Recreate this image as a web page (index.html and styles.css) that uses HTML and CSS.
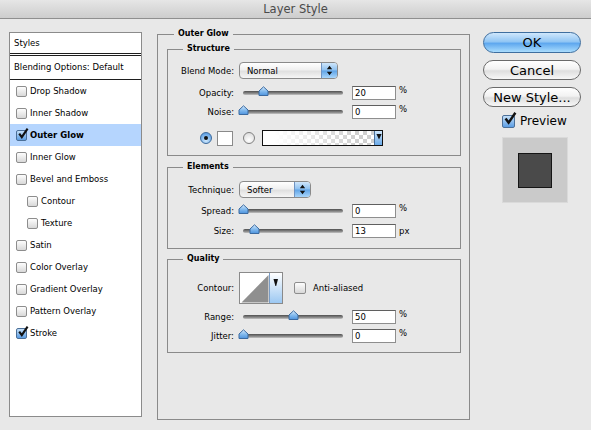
FILE: index.html
```html
<!DOCTYPE html>
<html lang="en">
<head>
    <meta charset="UTF-8">
    <meta name="viewport" content="width=device-width, initial-scale=1.0">
    <title>Layer Style</title>
    <link rel="stylesheet" href="styles.css">
</head>
<body>
    <!-- shared gradients and glyphs for the aqua controls -->
    <svg class="defs" width="0" height="0">
        <defs>
            <linearGradient id="aqua" x1="0" y1="0" x2="0" y2="1">
                <stop offset="0" stop-color="#d6eafc"/>
                <stop offset="0.5" stop-color="#84bbee"/>
                <stop offset="1" stop-color="#4d93de"/>
            </linearGradient>
            <linearGradient id="aqua-pale" x1="0" y1="0" x2="0" y2="1">
                <stop offset="0" stop-color="#ffffff"/>
                <stop offset="1" stop-color="#9cc8f2"/>
            </linearGradient>
            <symbol id="thumb" viewBox="0 0 11 10">
                <path d="M1 9.5 V5 L5.5 0.8 L10 5 V9.5 Z" fill="url(#aqua)" stroke="#3b6aa0"/>
            </symbol>
            <symbol id="tick" viewBox="0 0 12 12">
                <path d="M2.2 5.6 L4.8 9.2 L10.6 0.6" fill="none" stroke="#111" stroke-width="2.1"/>
            </symbol>
            <symbol id="updown" viewBox="0 0 7 11">
                <path d="M0.8 4.3 L3.5 0.8 L6.2 4.3 Z M0.8 6.7 L3.5 10.2 L6.2 6.7 Z" fill="#111"/>
            </symbol>
            <symbol id="down" viewBox="0 0 7 8">
                <path d="M0.5 1 H6.5 L3.5 7.5 Z" fill="#111"/>
            </symbol>
        </defs>
    </svg>

    <header class="titlebar">Layer Style</header>

    <div class="dialog">
        <div class="styles-panel">
            <div class="panel-head">Styles</div>
            <div class="panel-blend">Blending Options: Default</div>
            <ul class="effects">
                <li><span class="box"></span>Drop Shadow</li>
                <li><span class="box"></span>Inner Shadow</li>
                <li class="selected"><span class="box on"><svg><use href="#tick"/></svg></span>Outer Glow</li>
                <li><span class="box"></span>Inner Glow</li>
                <li><span class="box"></span>Bevel and Emboss</li>
                <li class="sub"><span class="box"></span>Contour</li>
                <li class="sub"><span class="box"></span>Texture</li>
                <li><span class="box"></span>Satin</li>
                <li><span class="box"></span>Color Overlay</li>
                <li><span class="box"></span>Gradient Overlay</li>
                <li><span class="box"></span>Pattern Overlay</li>
                <li><span class="box on"><svg><use href="#tick"/></svg></span>Stroke</li>
            </ul>
        </div>

        <fieldset class="group outer">
            <legend>Outer Glow</legend>

            <fieldset class="group inner structure">
                <legend>Structure</legend>
                <div class="row tall after-legend">
                    <label>Blend Mode:</label>
                    <div class="select blend">
                        <span>Normal</span>
                        <i class="select-arrows"><svg><use href="#updown"/></svg></i>
                    </div>
                </div>
                <div class="row after-select">
                    <label>Opacity:</label>
                    <div class="slider"><svg class="thumb" style="left: 18.5px"><use href="#thumb"/></svg></div>
                    <input class="num" value="20">
                    <span class="unit raised">%</span>
                </div>
                <div class="row close">
                    <label>Noise:</label>
                    <div class="slider"><svg class="thumb" style="left: -1.5px"><use href="#thumb"/></svg></div>
                    <input class="num" value="0">
                    <span class="unit raised">%</span>
                </div>
                <div class="row colors">
                    <span class="radio on"></span>
                    <span class="swatch"></span>
                    <span class="radio"></span>
                    <div class="gradient">
                        <span class="gradient-fill"></span>
                        <i class="gradient-arrow"><svg><use href="#down"/></svg></i>
                    </div>
                </div>
            </fieldset>

            <fieldset class="group inner elements">
                <legend>Elements</legend>
                <div class="row tall after-legend wide-gap">
                    <label>Technique:</label>
                    <div class="select technique">
                        <span>Softer</span>
                        <i class="select-arrows"><svg><use href="#updown"/></svg></i>
                    </div>
                </div>
                <div class="row">
                    <label>Spread:</label>
                    <div class="slider"><svg class="thumb" style="left: -1.5px"><use href="#thumb"/></svg></div>
                    <input class="num" value="0">
                    <span class="unit raised">%</span>
                </div>
                <div class="row">
                    <label>Size:</label>
                    <div class="slider"><svg class="thumb" style="left: 9.5px"><use href="#thumb"/></svg></div>
                    <input class="num" value="13">
                    <span class="unit">px</span>
                </div>
            </fieldset>

            <fieldset class="group inner quality">
                <legend>Quality</legend>
                <div class="row contour-row after-legend">
                    <label>Contour:</label>
                    <svg class="contour" width="44" height="32" viewBox="0 0 44 32">
                        <rect x="0.5" y="0.5" width="43" height="31" fill="#fff" stroke="#8a8a8a"/>
                        <path d="M2.5 30.5 L29.5 3 V30.5 Z" fill="#8f8f8f"/>
                        <rect x="31" y="1" width="12" height="30" fill="url(#aqua-pale)"/>
                        <line x1="30.5" y1="1" x2="30.5" y2="31" stroke="#7a9cc4"/>
                        <path d="M34.5 7 H39 L37.2 14 L36.4 14 Z" fill="#111"/>
                    </svg>
                    <span class="box anti"></span>
                    <span class="anti-label">Anti-aliased</span>
                </div>
                <div class="row">
                    <label>Range:</label>
                    <div class="slider"><svg class="thumb" style="left: 48.5px"><use href="#thumb"/></svg></div>
                    <input class="num" value="50">
                    <span class="unit raised">%</span>
                </div>
                <div class="row close">
                    <label>Jitter:</label>
                    <div class="slider"><svg class="thumb" style="left: -1.5px"><use href="#thumb"/></svg></div>
                    <input class="num" value="0">
                    <span class="unit raised">%</span>
                </div>
            </fieldset>
        </fieldset>

        <div class="actions">
            <button class="btn default">OK</button>
            <button class="btn">Cancel</button>
            <button class="btn">New Style...</button>
            <label class="preview-toggle">
                <span class="box on big"><svg><use href="#tick"/></svg></span>Preview
            </label>
            <div class="preview">
                <div class="preview-square"></div>
            </div>
        </div>
    </div>
</body>
</html>
```

FILE: styles.css
```css
body {
    margin: 0;
    background: #e8e8e8;
    font: 8.5px "DejaVu Sans", sans-serif;
    color: #000;
}

.defs {
    position: absolute;
}

.titlebar {
    height: 18px;
    line-height: 18px;
    border-bottom: 1px solid #8f8f8f;
    background: linear-gradient(#e6e6e6, #cdcdcd);
    text-align: center;
    font-size: 11.5px;
    color: #4a4a4a;
}

.dialog {
    display: flex;
    align-items: flex-start;
    padding-left: 9px;
}

/* left list of effects */
.styles-panel {
    margin-top: 13px;
    width: 133px;
    height: 385px;
    box-sizing: border-box;
    background: #fff;
    border: 1px solid #8b8b8b;
}

.panel-head {
    height: 20px;
    line-height: 20px;
    padding-left: 4px;
    border-bottom: 3px double #1e1e1e;
}

.panel-blend {
    height: 23px;
    line-height: 23px;
    padding-left: 4px;
    border-bottom: 1px solid #1e1e1e;
}

.effects {
    list-style: none;
    margin: 0;
    padding: 0;
}

.effects > li {
    display: flex;
    align-items: center;
    gap: 3px;
    height: 22px;
    padding-left: 6px;
}

.effects > li.sub {
    padding-left: 17px;
}

.effects > li.selected {
    background: #b5d5fe;
    font-weight: bold;
}

/* aqua checkbox */
.box {
    position: relative;
    flex: none;
    width: 11px;
    height: 11px;
    box-sizing: border-box;
    border: 1px solid #8d8d8d;
    border-radius: 2px;
    background: linear-gradient(#fdfdfd, #d8d8d8);
}

.box.on {
    border-color: #4b6f98;
    background: linear-gradient(#c4e0f9, #5c9de3);
}

.box svg {
    position: absolute;
    left: 0;
    top: -3px;
    width: 12px;
    height: 12px;
}

.box.big {
    width: 13px;
    height: 13px;
}

.box.big svg {
    width: 14px;
    height: 14px;
    top: -4px;
}

/* panels on the right */
.group {
    margin: 0;
    min-inline-size: 0;
    border: 1px solid #8a8a8a;
}

.group > legend {
    padding: 0 4px;
    font-weight: bold;
    font-size: 8px;
    line-height: 12px;
}

.outer {
    margin: 9px 0 0 15px;
    width: 313px;
    height: 392px;
    box-sizing: border-box;
    padding: 0 8px 0 9px;
}

.outer > legend {
    margin-left: 7px;
}

.inner {
    padding: 0 0 9px 0;
}

.inner > legend {
    margin-left: 15px;
}

.structure {
    margin-top: 3px;
}

.elements {
    margin-top: 5px;
    padding-bottom: 10px;
}

.quality {
    margin-top: 4px;
}

.row {
    display: flex;
    align-items: center;
    height: 14px;
    margin-top: 6px;
}

.row.tall {
    height: 17px;
}

.row.after-legend {
    margin-top: 7px;
}

.row.after-legend.wide-gap {
    margin-top: 8px;
}

.row.after-select {
    margin-top: 7px;
}

.row.close {
    margin-top: 5px;
}

.row > label {
    flex: none;
    width: 66px;
    margin-right: 5px;
    text-align: right;
}

/* popup menus */
.select {
    display: flex;
    align-items: center;
    height: 17px;
    box-sizing: border-box;
    border: 1px solid #8a8a8a;
    border-radius: 4px;
    background: linear-gradient(#ffffff, #f0f0f0 45%, #e0e0e0 55%, #f6f6f6);
    overflow: hidden;
}

.select > span {
    padding-left: 7px;
}

.select.blend {
    width: 99px;
}

.select.technique {
    width: 72px;
}

.select-arrows {
    display: flex;
    align-items: center;
    justify-content: center;
    margin-left: auto;
    width: 15px;
    height: 100%;
    border-left: 1px solid #6f93c2;
    background: linear-gradient(#cfe6fb, #8cc0f0 48%, #5fa3e6 52%, #a9d6fb);
}

.select-arrows svg {
    width: 7px;
    height: 11px;
}

/* sliders */
.slider {
    position: relative;
    flex: none;
    width: 106px;
    height: 14px;
}

.slider::before {
    content: '';
    position: absolute;
    left: 4px;
    right: 2px;
    top: 5px;
    height: 4px;
    border-radius: 2px;
    background: linear-gradient(#4f4f4f, #8a8a8a 60%, #c4c4c4);
}

.thumb {
    position: absolute;
    top: 0;
    width: 11px;
    height: 10px;
}

.num {
    flex: none;
    width: 44px;
    height: 14px;
    margin: 0 0 0 7px;
    padding: 0 2px;
    box-sizing: border-box;
    border: 1px solid #8e8e8e;
    border-top-color: #5f5f5f;
    background: #fff;
    font: 8.5px "DejaVu Sans", sans-serif;
    color: #000;
    outline: none;
}

.unit {
    margin-left: 3px;
}

.unit.raised {
    align-self: flex-start;
    line-height: 9px;
}

/* glow colour / gradient choice */
.row.colors {
    height: 16px;
    margin-top: 11px;
    padding-left: 32px;
}

.radio {
    position: relative;
    flex: none;
    width: 12px;
    height: 12px;
    box-sizing: border-box;
    border: 1px solid #808080;
    border-radius: 50%;
    background: radial-gradient(circle at 50% 70%, #ffffff, #d6d6d6);
}

.radio.on {
    border-color: #3c6a9c;
    background: radial-gradient(circle at 50% 75%, #d2eafd, #6aa8e8 70%, #4a8cd6);
}

.radio.on::after {
    content: '';
    position: absolute;
    left: 3px;
    top: 3px;
    width: 4px;
    height: 4px;
    border-radius: 50%;
    background: #111;
}

.swatch {
    flex: none;
    width: 16px;
    height: 15px;
    margin: 0 10px 0 5px;
    box-sizing: border-box;
    border: 1px solid #8a8a8a;
    background: #fff;
}

.gradient {
    display: flex;
    flex: none;
    width: 121px;
    height: 16px;
    margin-left: 7px;
    box-sizing: border-box;
    border: 1px solid #111;
}

.gradient-fill {
    flex: 1;
    background:
        linear-gradient(to right, #fff 10%, rgba(255, 255, 255, 0) 85%),
        repeating-conic-gradient(#cfcfcf 0 25%, #fff 0 50%) 0 0 / 8px 8px;
}

.gradient-arrow {
    display: flex;
    align-items: flex-start;
    justify-content: center;
    width: 8px;
    padding-top: 2px;
    box-sizing: border-box;
    border-left: 1px solid #4a6f9a;
    background: linear-gradient(#cfe6fb, #6aaae9);
}

.gradient-arrow svg {
    width: 6px;
    height: 7px;
}

/* quality */
.row.contour-row {
    height: 32px;
}

.contour {
    flex: none;
}

.box.anti {
    width: 12px;
    height: 12px;
    margin-left: 11px;
}

.anti-label {
    margin-left: 7px;
}

/* buttons and preview */
.actions {
    margin: 13px 0 0 13px;
}

.btn {
    display: block;
    width: 98px;
    height: 20px;
    margin-top: 7px;
    padding: 0;
    border: 1px solid #6a6a6a;
    border-radius: 11px;
    background: linear-gradient(#ffffff, #f2f2f2 45%, #dedede 55%, #f7f7f7);
    font: 13px "DejaVu Sans", sans-serif;
    line-height: 17px;
    color: #000;
}

.btn.default {
    height: 21px;
    margin-top: 0;
    border-color: #3e6e9f;
    background: linear-gradient(#cfe7fc, #92c6f4 45%, #5fa8ef 55%, #a9dcfd);
}

.preview-toggle {
    display: flex;
    align-items: center;
    gap: 5px;
    margin: 7px 0 0 19px;
    height: 14px;
    font-size: 12px;
}

.preview {
    display: flex;
    align-items: center;
    justify-content: center;
    width: 66px;
    height: 66px;
    margin: 9px 0 0 19px;
    box-sizing: border-box;
    border: 1px solid #dadada;
    background: #cacaca;
}

.preview-square {
    width: 34px;
    height: 35px;
    box-sizing: border-box;
    border: 1px solid #151515;
    background: #4a4a4a;
}
```
